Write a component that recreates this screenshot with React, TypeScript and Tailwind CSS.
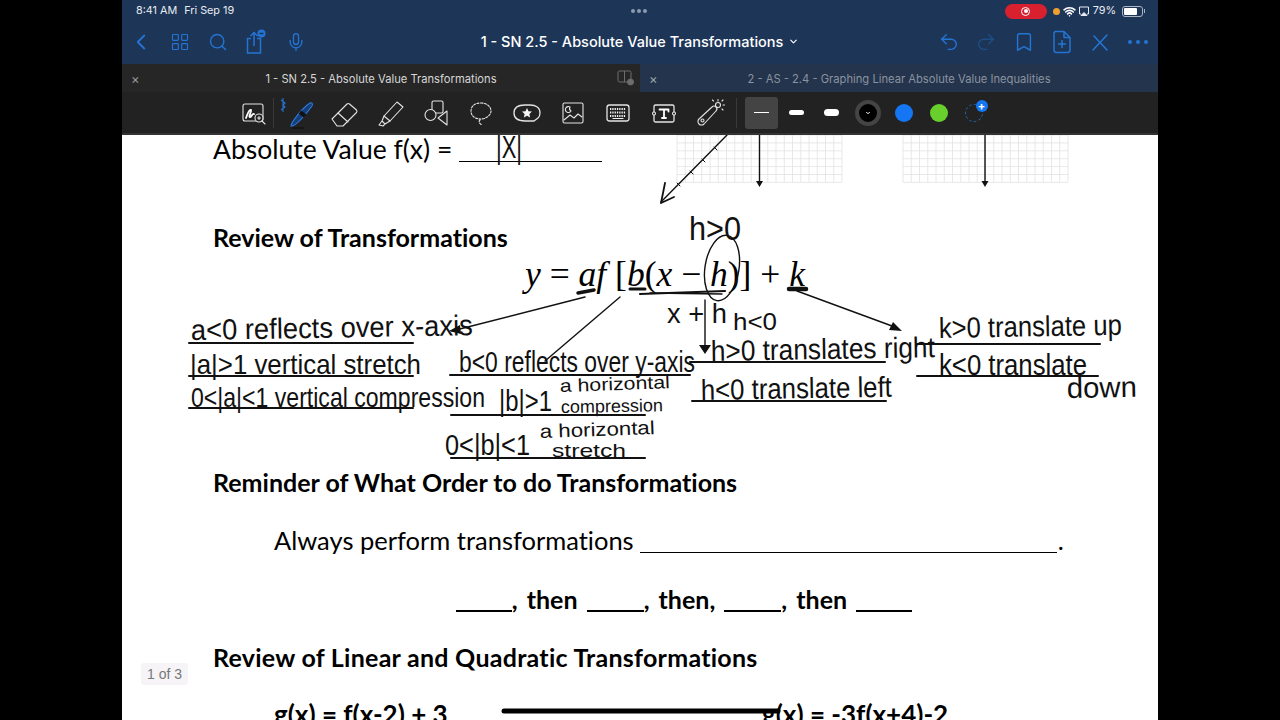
import { ChevronLeft, LayoutGrid, Search, Mic, Undo2, Redo2, Bookmark, ChevronDown, Wifi } from "lucide-react";
import React from "react";

const B = "#2474d4";

function Tool({ children }: { children: React.ReactNode }) {
  return <div className="flex w-[45.7px] h-full items-center justify-center shrink-0">{children}</div>;
}

function ToolSvg({ children, w = 36, h = 36 }: { children: React.ReactNode; w?: number; h?: number }) {
  return (
    <svg width={w} height={h} viewBox="0 0 36 36" fill="none" stroke="#e4e4e4" strokeWidth="1.1" strokeLinejoin="round" strokeLinecap="round">
      {children}
    </svg>
  );
}

const HAND: [string, number, number, number, number, number?][] = [
  ["|X|", 496, 158, 26, 31, 0],
  ["a<0 reflects over x-axis", 191, 340, 282, 29, -1],
  ["|a|>1 vertical stretch", 190, 374, 231, 28, 0],
  ["0<|a|<1 vertical compression", 191, 407, 294, 28, 0],
  ["b<0 reflects over y-axis", 459, 372, 236, 29, 0],
  ["|b|>1", 499, 411, 53, 29, 0],
  ["a horizontal", 560, 392, 110, 18, -2],
  ["compression", 561, 413, 102, 18, -1],
  ["0<|b|<1", 445, 455, 85, 29, 0],
  ["a horizontal", 540, 438, 115, 19, -2],
  ["stretch", 552, 457, 74, 19, 0],
  ["h>0", 689, 240, 52, 34, 0],
  ["h<0", 733, 330, 44, 24, 0],
  ["x + h", 667, 323, 60, 28, 0],
  ["h>0 translates right", 711, 361, 224, 29, -1],
  ["h<0 translate left", 701, 400, 191, 29, -1],
  ["k>0 translate up", 939, 338, 183, 29, -1],
  ["k<0 translate", 939, 375, 148, 29, 0],
  ["down", 1067, 398, 70, 29, -1],
];

const RULES: [number, number, number, number][] = [
  [189, 343, 413, 343],
  [189, 376, 413, 376],
  [189, 408, 413, 408],
  [450, 375, 690, 375],
  [451, 415, 645, 415],
  [451, 458, 645, 458],
  [690, 362, 885, 362],
  [692, 401, 886, 401],
  [917, 344, 1100, 344],
  [917, 376, 1098, 376],
];

function GraphPaper({ x, w }: { x: number; w: number }) {
  const vs = Array.from({ length: 21 }, (_, i) => x + (i * w) / 20);
  const hs = Array.from({ length: 7 }, (_, i) => 135 + i * 7.9);
  return (
    <g stroke="#e2e2e2" strokeWidth="0.8">
      {vs.map((v) => <line key={v} x1={v} x2={v} y1={135} y2={182} />)}
      {hs.map((h) => <line key={h} x1={x} x2={x + w} y1={h} y2={h} />)}
    </g>
  );
}

function Ink() {
  return (
    <svg className="absolute inset-0 w-full h-full" viewBox="122 135 1036 585" fill="none">
      <GraphPaper x={677} w={165} />
      <GraphPaper x={903} w={165} />
      <g stroke="#111" strokeWidth="1.4" strokeLinecap="round">
        <path d="M727 135 L661 202" />
        <path d="M661 203 L665 183 M661 203 L674 197" strokeWidth="1.8" />
        <path d="M677 183l3 3M690 171l3 3M702 159l3 3M714 147l3 3" strokeWidth="1" />
        <path d="M759.500 135V184M985 135V184" />
        <path d="M585 297 L452 331M620 297 L545 361M705 300 V345M797 291 L892 326" />
        <ellipse cx="722" cy="268" rx="17" ry="33" transform="rotate(9 722 268)" />
      </g>
      <g fill="#111">
        <path d="M756 181h7l-3.500 6zM981.500 181h7l-3.500 6z" />
        <path d="M449 331l11-6 1 9zM699 345h12l-6 9zM902 331l-13-1 4-8z" />
      </g>
      <g stroke="#111" strokeLinecap="round">
        <path d="M578 293 L594 290" strokeWidth="3.500" />
        <path d="M630 289 L645 289" strokeWidth="3" />
        <path d="M640 294 L725 291" strokeWidth="2.200" />
        <path d="M650 293 L722 294" strokeWidth="1.500" />
        <path d="M789 289 L806 289" strokeWidth="4.500" />
      </g>
      <g stroke="#111" strokeWidth="2" strokeLinecap="round">
        {RULES.map(([a, b, c, d]) => <line key={`${a}-${b}`} x1={a} y1={b} x2={c} y2={d} />)}
      </g>
      <line x1="504" y1="711" x2="778" y2="711" stroke="#000" strokeWidth="5" strokeLinecap="round" />
      <g fill="#111" fontFamily="'Liberation Sans', sans-serif">
        {HAND.map(([t, x, y, w, s, r]) => (
          <text key={`${t}-${x}`} x={x} y={y} fontSize={s} textLength={w} lengthAdjust="spacingAndGlyphs" transform={r ? `rotate(${r} ${x} ${y})` : undefined}>
            {t}
          </text>
        ))}
      </g>
    </svg>
  );
}

export default function App() {
  return (
    <div className="flex justify-center w-[1280px] h-[720px] bg-black overflow-hidden" style={{ fontFamily: "Inter, 'Liberation Sans', sans-serif" }}>
      <div className="flex flex-col w-[1036px] h-full">
        {/* status + nav */}
        <div className="bg-[#1d3557] h-[64px] shrink-0 flex flex-col">
          <div className="relative flex items-center justify-between h-[21px] pl-[14px] pr-[13px] pt-[1px] text-[10.800px] text-[#e8ecf2]">
            <div className="flex gap-[7px]"><span>8:41 AM</span><span>Fri Sep 19</span></div>
            <div className="absolute left-[509px] top-[9px] flex gap-[2px]">
              <span className="w-[4px] h-[4px] rounded-full bg-[#8b9ab0]" />
              <span className="w-[4px] h-[4px] rounded-full bg-[#8b9ab0]" />
              <span className="w-[4px] h-[4px] rounded-full bg-[#8b9ab0]" />
            </div>
            <div className="flex items-center">
              <div className="flex items-center justify-center w-[42px] h-[15px] rounded-full bg-[#d8202e] mr-[6px]">
                <span className="flex items-center justify-center w-[9px] h-[9px] rounded-full border border-white"><span className="w-[4px] h-[4px] rounded-full bg-white" /></span>
              </div>
              <span className="w-[7px] h-[7px] rounded-full bg-[#f0a030] mr-[3px]" />
              <Wifi size={13} color="#fff" strokeWidth={3} className="mr-[2px]" />
              <svg width="12" height="12" viewBox="0 0 12 12" fill="none" stroke="#e8ecf2" strokeWidth="1" className="mr-[3px]"><path d="M3 9H1.500V2h9v7H9" /><path d="M6 7.500l3 3H3z" fill="#e8ecf2" /></svg>
              <span className="mr-[6px]">79%</span>
              <div className="flex items-center">
                <div className="w-[21px] h-[11px] rounded-[3px] border border-[#aab4c2] p-[1px]"><div className="w-[78%] h-full rounded-[1px] bg-white" /></div>
                <div className="w-[1px] h-[4px] bg-[#aab4c2] ml-[1px]" />
              </div>
            </div>
          </div>
          <div className="grid grid-cols-[1fr_auto_1fr] items-center flex-1 pb-[2px] text-white">
            <div className="flex items-center pl-[6px] gap-[15px]">
              <ChevronLeft size={26} color={B} strokeWidth={1.7} className="-mr-[2px]" />
              <LayoutGrid size={20} color={B} strokeWidth={1.4} className="ml-[3px]" />
              <Search size={20} color={B} strokeWidth={1.7} className="ml-[3px]" />
              <svg width="22" height="26" viewBox="0 0 22 26" fill="none" stroke={B} strokeWidth="1.5" className="ml-[2px]"><path d="M6 9.500H2.500V24h13V9.500H12" /><path d="M9 17V4M5.500 7L9 3.500 12.500 7" /><circle cx="16.500" cy="4.500" r="4" fill={B} stroke="none" /><path d="M14.500 4.500h4" stroke="#1d3557" /></svg>
              <Mic size={20} color={B} strokeWidth={1.6} className="ml-[4px]" />
            </div>
            <div className="flex items-center gap-[5px] text-[14.500px] font-medium">
              <span>1 - SN 2.5 - Absolute Value Transformations</span>
              <ChevronDown size={11} strokeWidth={2.5} />
            </div>
            <div className="flex items-center justify-end gap-[16px] pr-[9px]">
              <Undo2 size={22} color={B} strokeWidth={1.5} className="-mr-[1px]" />
              <Redo2 size={22} color="#1f4e87" strokeWidth={1.5} />
              <Bookmark size={22} color={B} strokeWidth={1.6} />
              <svg width="22" height="24" viewBox="0 0 22 24" fill="none" stroke={B} strokeWidth="1.5" strokeLinejoin="round"><path d="M4 1.500h9l6 6V20a2.500 2.500 0 0 1-2.500 2.500h-11A2.500 2.500 0 0 1 3 20V3zM13 1.500V7.500h6M11 10v8M7 14h8" /></svg>
              <svg width="22" height="22" viewBox="0 0 22 22" fill="none" stroke={B} strokeWidth="1.6" strokeLinecap="round"><path d="M4 19L18 4M5 5l13 14" /></svg>
              <svg width="22" height="6" viewBox="0 0 22 6" fill={B}><circle cx="3" cy="3" r="2" /><circle cx="11" cy="3" r="2" /><circle cx="19" cy="3" r="2" /></svg>
            </div>
          </div>
        </div>
        {/* tabs */}
        <div className="flex h-[28px] shrink-0 pt-[2px] text-[11.200px]">
          <div className="relative flex items-center justify-center w-[518px] -mt-[2px] pt-[2px] bg-[#262626] text-[#d6d6d6]">
            <span className="absolute left-[9px] text-[#999] text-[13px] leading-none">×</span>
            <span>1 - SN 2.5 - Absolute Value Transformations</span>
            <svg className="absolute right-[5px] top-[6px]" width="18" height="17" viewBox="0 0 18 17" fill="none" stroke="#6d6d6d" strokeWidth="1"><rect x="1" y="1" width="13" height="11" rx="1.500" /><path d="M7.500 1v11" /><circle cx="13.500" cy="12" r="3" fill="#6d6d6d" /></svg>
          </div>
          <div className="relative flex items-center justify-center flex-1 -mt-[2px] pt-[2px] bg-[#24344c] text-[#8a93a0]">
            <span className="absolute left-[9px] text-[#9aa2ad] text-[13px] leading-none">×</span>
            <span>2 - AS - 2.4 - Graphing Linear Absolute Value Inequalities</span>
          </div>
        </div>
        {/* tools */}
        <div className="flex items-center h-[43px] shrink-0 bg-[#222222] border-b-2 border-[#333333] pl-[108px]">
          <Tool>
            <ToolSvg>
              <rect x="8" y="9" width="20" height="17" rx="2" />
              <path d="M11 23c2-6 4-9 5-8s-3 7-1 7 2-4 4-3" strokeWidth="1.800" stroke="#fff" />
              <circle cx="24" cy="23" r="4" fill="#222" />
              <path d="M27 26l3 3M24 21.500v3M22.500 23h3" />
            </ToolSvg>
          </Tool>
          <div className="w-px h-[30px] bg-[#3a3a3a] -ml-[3px] mr-[2px]" />
          <Tool>
            <svg width="40" height="36" viewBox="0 0 40 36" fill="none">
              <path d="M2 5l4 3-2 2 2 2-4 3M4 3v14" stroke={B} strokeWidth="1.100" />
              <path d="M12 31c0-3 10-17 19-23 2-1 3 1 2 3-6 8-15 19-20 20z" fill="#143f78" stroke="#2f7be0" strokeWidth="1.100" />
              <path d="M21 17l5 4" stroke="#111" strokeWidth="4" />
              <path d="M13 33h12" stroke="#111" strokeWidth="1.200" />
            </svg>
          </Tool>
          <Tool>
            <ToolSvg>
              <path d="M6 24L21 9a2 2 0 0 1 2.500 0l7 6a2 2 0 0 1 0 2.500L17 31H11z" />
              <path d="M12 18l10 9" />
            </ToolSvg>
          </Tool>
          <Tool>
            <ToolSvg>
              <path d="M12 21L25 7l6 5-13 14z" />
              <path d="M12 21l-2 5 3 3 5-3M10 26l-3 4 4 1 2-2" />
            </ToolSvg>
          </Tool>
          <Tool>
            <ToolSvg>
              <rect x="14" y="6" width="11" height="12" rx="1.500" />
              <circle cx="12.500" cy="20" r="5.500" fill="#222" />
              <path d="M29 16v14l-9-7z" fill="#222" />
            </ToolSvg>
          </Tool>
          <Tool>
            <ToolSvg>
              <path d="M18 8c6 0 10 4 10 8s-5 8-10 8c-6 0-10-3-10-8s4-8 10-8zM17 25c-2 2 0 4 2 5" strokeDasharray="2 1.500" />
            </ToolSvg>
          </Tool>
          <Tool>
            <ToolSvg>
              <path d="M25 26H16c-7 0-11-3-11-8s4-8 11-8h5c6 0 10 3 10 8 0 3-1 4-2 5l-4 3z" strokeWidth="1.300" />
              <path d="M18 13l1.500 3.200 3.500.4-2.600 2.400.7 3.500-3.100-1.800-3.100 1.800.7-3.500-2.600-2.400 3.500-.4z" fill="#f4f4f4" stroke="none" />
            </ToolSvg>
          </Tool>
          <Tool>
            <ToolSvg>
              <rect x="8" y="8" width="20" height="20" rx="1.500" />
              <path d="M9 25l6-5 4 3 4-4 4 3" />
              <path d="M15 12a3 3 0 1 0 1 4 3 3 0 0 1-1-4z" />
            </ToolSvg>
          </Tool>
          <Tool>
            <ToolSvg>
              <rect x="7" y="10" width="22" height="16" rx="2.500" strokeWidth="1.300" />
              <path d="M10 14h16M10 17.500h16M10 21h16" strokeWidth="2.200" stroke="#f2f2f2" strokeDasharray="1.300 1" strokeLinecap="butt" />
              <path d="M13 23.500h10" strokeWidth="1.200" stroke="#f2f2f2" />
            </ToolSvg>
          </Tool>
          <Tool>
            <ToolSvg>
              <rect x="8" y="10" width="20" height="17" rx="1.500" strokeWidth="1.300" />
              <circle cx="8" cy="18.500" r="1.500" fill="#222" />
              <circle cx="28" cy="18.500" r="1.500" fill="#222" />
              <path d="M13.500 14.500h9v2M18 14.500V23M16 23h4" stroke="#fff" strokeWidth="1.800" />
            </ToolSvg>
          </Tool>
          <Tool>
            <ToolSvg>
              <path d="M7 24L20 12a2.500 2.500 0 0 1 4 4L12 29a2.500 2.500 0 0 1-5-5z" />
              <circle cx="10.500" cy="25.500" r="1.500" />
              <circle cx="26" cy="10" r="2.500" />
              <path d="M26 4.500V6M31 10h1.500M30 6l1-1M21.500 6l-1-1M30 14l1 1" />
            </ToolSvg>
          </Tool>
          <div className="w-px h-[30px] bg-[#3a3a3a] ml-[3px] mr-[8px]" />
          <div className="flex items-center justify-center w-[33px] h-[32px] rounded-[3px] bg-[#444444]"><span className="w-[15px] h-[1.500px] bg-white" /></div>
          <div className="flex items-center justify-center w-[36px] h-full ml-[1px]"><span className="w-[15px] h-[5px] rounded-full bg-white" /></div>
          <div className="flex items-center justify-center w-[34px] h-full"><span className="w-[15px] h-[7px] rounded-full bg-white" /></div>
          <div className="flex items-center justify-center w-[38px] h-full">
            <span className="flex items-center justify-center w-[26px] h-[26px] rounded-full bg-black border-[4px] border-[#444444]"><ChevronDown size={6} color="#fff" strokeWidth={4} /></span>
          </div>
          <div className="flex items-center justify-center w-[35px] h-full"><span className="w-[18px] h-[18px] rounded-full bg-[#1476f2]" /></div>
          <div className="flex items-center justify-center w-[34px] h-full"><span className="w-[18px] h-[18px] rounded-full bg-[#68d02c]" /></div>
          <div className="relative flex items-center justify-center w-[36px] h-full">
            <span className="w-[18px] h-[18px] rounded-full border border-dashed border-[#2468b8]" />
            <span className="absolute left-[20px] top-[8px] flex items-center justify-center w-[12px] h-[12px] rounded-full bg-[#1476f2] text-white text-[11px] font-bold leading-none">+</span>
          </div>
        </div>
        {/* document */}
        <div className="relative flex-1 bg-white overflow-hidden text-black [font-variant-ligatures:none]" style={{ fontFamily: "Lato, 'Liberation Sans', sans-serif" }}>
          <div className="flex flex-col -mt-[1px]">
            <div className="flex items-start h-[30px] pl-[91px] text-[26.500px] leading-[30px]">
              <span>Absolute Value f(x) =</span>
              <span className="inline-block w-[143px] h-[28px] border-b border-black ml-[7px]" />
            </div>
            <div className="mt-[58px] pl-[91px] h-[30px] text-[25px] leading-[30px] font-bold">Review of Transformations</div>
            <div className="flex justify-center mt-[1px] pl-[50px] h-[42px] text-[35.500px] leading-[42px]" style={{ fontFamily: "'Liberation Serif', serif" }}>
              <span><i>y</i> = <i>af</i> [<i>b</i>(<i>x</i> − <i>h</i>)] + <i>k</i></span>
            </div>
            <div className="mt-[172px] pl-[91px] h-[30px] text-[25px] leading-[30px] font-bold">Reminder of What Order to do Transformations</div>
            <div className="flex items-start mt-[28px] pl-[152px] h-[30px] text-[25.500px] leading-[30px]">
              <span>Always perform transformations</span>
              <span className="inline-block w-[417px] h-[28px] border-b border-black ml-[6px]" />
              <span className="ml-[1px]">.</span>
            </div>
            <div className="flex justify-center items-start mt-[29px] pl-[88px] h-[30px] text-[25px] leading-[30px] font-bold [word-spacing:3px]">
              <span className="inline-block w-[56px] h-[28px] border-b-2 border-black" />
              <span>, then&nbsp;</span>
              <span className="inline-block w-[57px] h-[28px] border-b-2 border-black" />
              <span>, then,&nbsp;</span>
              <span className="inline-block w-[57px] h-[28px] border-b-2 border-black" />
              <span>, then&nbsp;</span>
              <span className="inline-block w-[56px] h-[28px] border-b-2 border-black" />
            </div>
            <div className="mt-[28px] pl-[91px] h-[30px] text-[25px] leading-[30px] font-bold tracking-[0.26px]">Review of Linear and Quadratic Transformations</div>
            <div className="flex mt-[27px] pl-[152px] text-[26px] leading-[30px] font-bold">
              <span className="w-[488px]">g(x) = f(x-2) + 3</span>
              <span>g(x) = -3f(x+4)-2</span>
            </div>
          </div>
          <Ink />
          <div className="absolute left-[19px] top-[528px] px-[6px] h-[22px] flex items-center rounded-[3px] bg-[#f6f4f7] text-[#777] text-[14px]" style={{ fontFamily: "'Liberation Sans', sans-serif" }}>1 of 3</div>
        </div>
      </div>
    </div>
  );
}
